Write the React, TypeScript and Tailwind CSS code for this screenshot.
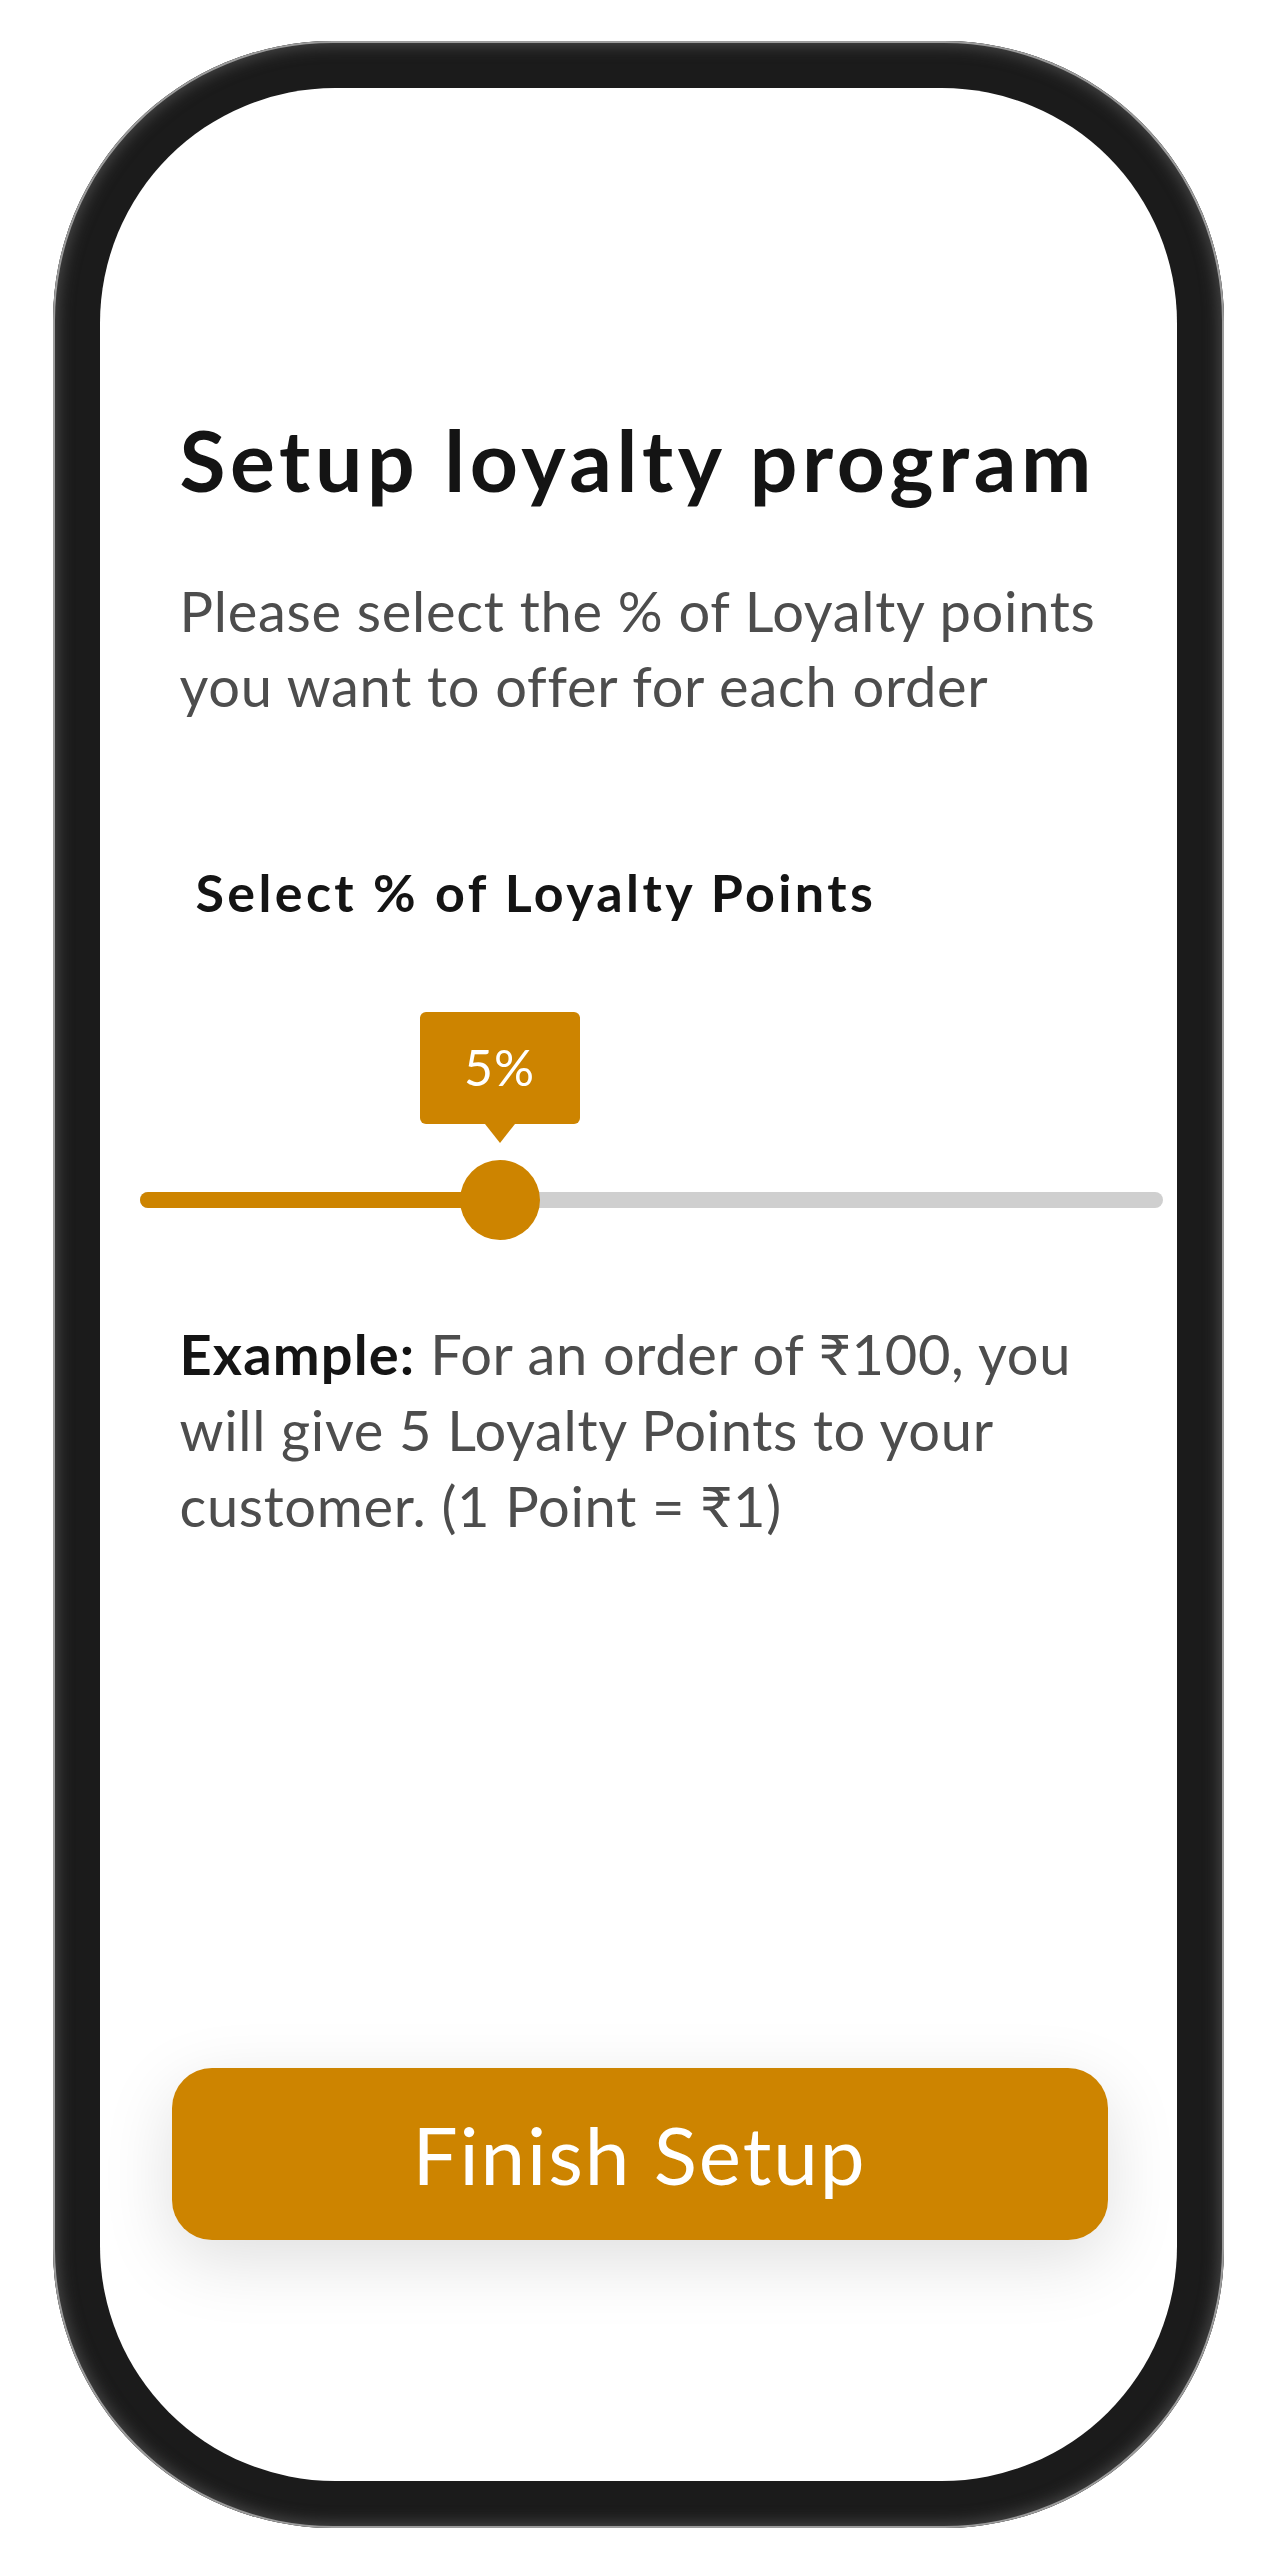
const ORANGE = "bg-[#cd8400]";

function LoyaltySlider() {
  // thumb sits at 360px along a 1023px track (value shown as 5%)
  const fill = 360;
  return (
    <div className="relative ml-[-40px] mr-[-66px] mt-[85px] h-[228px]">
      <div className="mt-[180px] h-[16px] w-full rounded-full bg-[#cfcfcf]">
        <div className={`h-full rounded-full ${ORANGE}`} style={{ width: fill }} />
      </div>

      {/* thumb */}
      <div
        className={`absolute top-[148px] h-[80px] w-[80px] rounded-full ${ORANGE}`}
        style={{ left: fill - 40 }}
      />

      {/* value bubble */}
      <div className="absolute top-0" style={{ left: fill - 80 }}>
        <div className={`flex h-[112px] w-[160px] items-center justify-center rounded-[6px] ${ORANGE} text-[50px] tracking-[0.02em] text-white`}>
          5%
        </div>
        <div className="mx-auto h-0 w-0 border-x-[15px] border-t-[19px] border-x-transparent border-t-[#cd8400]" />
      </div>
    </div>
  );
}

export default function App() {
  return (
    <div className="flex h-[2568px] w-full items-center justify-center bg-white font-['Lato','Noto_Sans',sans-serif]">
      <div className="h-[2487px] w-[1171px] rounded-[280px] bg-[#1b1b1b] p-[47px] shadow-[inset_0_0_0_2px_#9c9c9c,inset_0_0_16px_4px_#4d4d4d]">
        <div className="flex h-full w-full flex-col rounded-[235px] bg-white px-[80px] pb-[241px] pt-[322px]">
          <h1 className="whitespace-nowrap text-[84px] font-bold leading-[100px] tracking-[0.055em] text-[#141414]">
            Setup loyalty program
          </h1>
          <p className="mt-[63px] whitespace-nowrap text-[56px] leading-[75px] tracking-[0.013em] text-[#4d4d4d]">
            Please select the % of Loyalty points
            <br />
            you want to offer for each order
          </p>

          <h2 className="ml-[16px] mt-[134px] whitespace-nowrap text-[52px] font-bold leading-[70px] tracking-[0.065em] text-[#141414]">
            Select % of Loyalty Points
          </h2>

          <LoyaltySlider />

          <p className="mt-[76px] whitespace-nowrap text-[56px] leading-[76px] tracking-[0.012em] text-[#4d4d4d]">
            <span className="font-bold tracking-[0.02em] text-[#141414]">Example:</span> For an order of ₹100, you
            <br />
            will give 5 Loyalty Points to your
            <br />
            customer. (1 Point = ₹1)
          </p>

          <button
            type="button"
            className={`ml-[-8px] mt-auto flex h-[172px] w-[936px] items-center justify-center rounded-[40px] ${ORANGE} text-[80px] tracking-[0.024em] text-white shadow-[0_20px_70px_rgba(0,0,0,0.13)]`}
          >
            Finish Setup
          </button>
        </div>
      </div>
    </div>
  );
}
